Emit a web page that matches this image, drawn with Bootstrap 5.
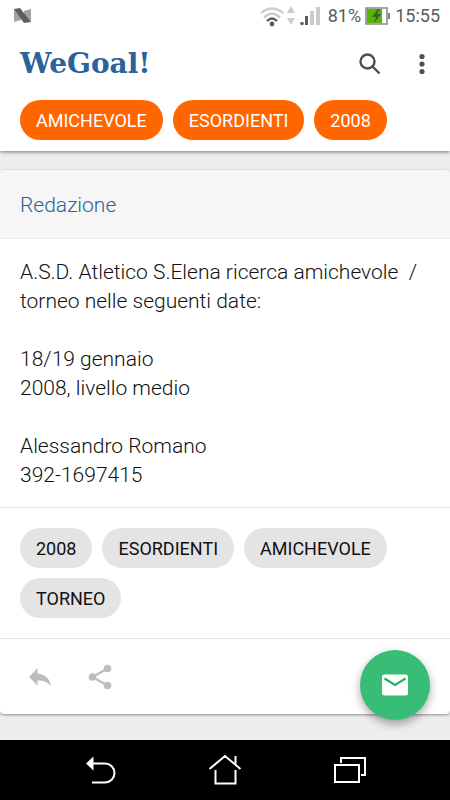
<!DOCTYPE html>
<html lang="it">
<head>
<meta charset="utf-8">
<meta name="viewport" content="width=device-width, initial-scale=1">
<title>WeGoal!</title>
<link href="https://cdn.jsdelivr.net/npm/bootstrap@5.3.0/dist/css/bootstrap.min.css" rel="stylesheet">
<style>
  body { font-family: Roboto, "Liberation Sans", sans-serif; background: #eee; color: #111; }
  svg { display: block; flex: none; }
  .status-bar { height: 31px; padding: 0 10px 0 13px; color: #5c5c5c; font-size: 18px; }
  .top-panel { background: #fff; box-shadow: 0 1px 4px rgba(0,0,0,.5); }
  .brand-row { height: 66px; padding: 0 14px 0 20px; }
  .wordmark { font: bold 28px/1 "DejaVu Serif", serif; color: #296399; }
  .icon-btn { color: #505050; }
  .chips { gap: 10px; }
  .filters { padding: 3px 20px 11px; }
  .chip { --bs-btn-padding-x: 16px; --bs-btn-padding-y: 0; --bs-btn-font-size: 18px; height: 40px; background: #e4e4e4; color: #111; }
  .chip-active { background: #f60; color: #fff; }
  .post { margin: 19px 0 26px; border: 0; border-radius: 4px; overflow: hidden; box-shadow: 0 1px 3px rgba(0,0,0,.4); color: #111; }
  .post-head { padding: 21px 20px 18px; background: #f6f6f6; border-bottom: 1px solid #eee; font-size: 21px; line-height: 29px; font-weight: 300; }
  .post-head a { color: #296399; }
  .post-text { padding: 19px 20px 17px; font-size: 21px; line-height: 29px; font-weight: 300; }
  .post-text p { margin: 0 0 29px; }
  .post-tags { padding: 20px; border-top: 1px solid #e9e9e9; border-bottom: 1px solid #e9e9e9; }
  .post-actions { height: 75px; padding: 0 28px; gap: 36px; }
  .post-actions button { color: #bdbdbd; }
  .compose { right: 20px; bottom: 80px; width: 70px; height: 70px; background: #38bd76; box-shadow: 0 4px 10px rgba(0,0,0,.35); z-index: 5; }
  .system-nav { height: 60px; background: #000; padding: 0 37px 0 39px; }
  .system-nav button { color: #fff; }
</style>
</head>
<body class="d-flex flex-column min-vh-100">
<header class="top-panel">
  <div class="status-bar d-flex align-items-center justify-content-between">
    <svg width="19" height="16" viewBox="0 0 19 16"><path fill="#a2a2a2" d="M1 1l7 6v5l-7 2zM18 1v13l-7-5V3z"/><path fill="#5e5e5e" d="M1 1l6-1 11 14-7 1z"/></svg>
    <div class="d-flex align-items-center">
      <svg width="64" height="22" viewBox="0 0 64 22">
        <g fill="none" stroke-width="2.4"><path stroke="#ccc" d="M1 8Q12-1 23 8M4 12.500Q12 5 20 12.500"/><path stroke="#5c5c5c" d="M7 16q5-5 10 0"/></g>
        <circle cx="12" cy="19" r="2.400" fill="#5c5c5c"/>
        <path fill="#ccc" d="M31 1l4 7h-8zM27 13h8l-4 7zM50 6h4v14h-4zM56 2h4v18h-4z"/><path fill="#5c5c5c" d="M45 11h3v9h-3z"/><circle cx="42" cy="18.500" r="1.800" fill="#5c5c5c"/>
      </svg>
      <span class="ms-1">81%</span>
      <svg class="ms-1" width="26" height="18" viewBox="0 0 26 18"><path fill="#fff" stroke="#858585" stroke-width="1.500" d="M1 1h21v16H1z"/><path fill="#55b600" d="M2 2h15v14H2z"/><path fill="#858585" d="M23 6h2v6h-2z"/><path fill="#3b5f27" d="M13 2L7 10h4l-2 6 7-9h-4l3-5z"/></svg>
      <span class="ms-1">15:55</span>
    </div>
  </div>
  <div class="brand-row d-flex align-items-center">
    <a href="#" class="wordmark text-decoration-none me-auto">WeGoal!</a>
    <button type="button" class="btn icon-btn border-0 p-0" aria-label="Cerca"><svg width="28" height="28" viewBox="0 0 28 28" fill="none" stroke="currentColor" stroke-width="2.400"><circle cx="11.500" cy="11.500" r="7"/><path d="M16.500 16.500l7 7"/></svg></button>
    <button type="button" class="btn icon-btn border-0 p-0 ms-4" aria-label="Menu"><svg width="28" height="28" viewBox="0 0 28 28" fill="currentColor"><circle cx="14" cy="6.500" r="2.600"/><circle cx="14" cy="14" r="2.600"/><circle cx="14" cy="21.500" r="2.600"/></svg></button>
  </div>
  <div class="filters chips d-flex flex-wrap">
    <button type="button" class="btn chip chip-active rounded-pill border-0">AMICHEVOLE</button>
    <button type="button" class="btn chip chip-active rounded-pill border-0">ESORDIENTI</button>
    <button type="button" class="btn chip chip-active rounded-pill border-0">2008</button>
  </div>
</header>
<main class="flex-grow-1">
  <article class="card post">
    <div class="post-head"><a href="#" class="text-decoration-none">Redazione</a></div>
    <div class="post-text">
      <p>A.S.D. Atletico S.Elena ricerca amichevole&nbsp; / torneo nelle seguenti date:</p>
      <p>18/19 gennaio<br>2008, livello medio</p>
      <p class="mb-0">Alessandro Romano<br>392-1697415</p>
    </div>
    <div class="post-tags chips d-flex flex-wrap">
      <button type="button" class="btn chip rounded-pill border-0">2008</button>
      <button type="button" class="btn chip rounded-pill border-0">ESORDIENTI</button>
      <button type="button" class="btn chip rounded-pill border-0">AMICHEVOLE</button>
      <button type="button" class="btn chip rounded-pill border-0">TORNEO</button>
    </div>
    <div class="post-actions d-flex align-items-center">
      <button type="button" class="btn border-0 p-0" aria-label="Rispondi"><svg width="24" height="26" viewBox="0 0 24 26" fill="currentColor"><path d="M9.500 4v5.500C17 10 22 15 23 22c-4-4.500-8-5.500-13.500-5.500v5L1 13z"/></svg></button>
      <button type="button" class="btn border-0 p-0" aria-label="Condividi"><svg width="24" height="26" viewBox="0 0 24 26" fill="currentColor"><path fill="none" stroke="currentColor" stroke-width="2.200" d="M19.500 4.500L4.500 13l15 8.500"/><circle cx="19.500" cy="4.500" r="3.800"/><circle cx="4.500" cy="13" r="3.800"/><circle cx="19.500" cy="21.500" r="3.800"/></svg></button>
    </div>
  </article>
</main>
<button type="button" class="btn compose position-fixed rounded-circle border-0 p-0 d-flex align-items-center justify-content-center" aria-label="Scrivi"><svg width="28" height="22" viewBox="0 0 28 22"><rect x="1" y=".5" width="26" height="21" rx="2.500" fill="#fff"/><path fill="none" stroke="#1db763" stroke-width="2.200" d="M3.500 4.500L14 11l10.500-6.500"/></svg></button>
<nav class="system-nav d-flex align-items-center justify-content-around sticky-bottom">
  <button type="button" class="btn border-0 p-0" aria-label="Indietro"><svg width="32" height="32" viewBox="0 0 32 32" fill="none" stroke="currentColor" stroke-width="2"><path d="M7 9.500h13a9.500 9.500 0 0 1 0 19H7"/><path fill="currentColor" stroke="none" d="M1 9.500L8.500 2.500v14z"/></svg></button>
  <button type="button" class="btn border-0 p-0" aria-label="Home"><svg width="34" height="32" viewBox="0 0 34 32" fill="none" stroke="currentColor" stroke-width="2"><path d="M1.500 15L17 2l15.500 13M27.500 2v8M7.500 16v13.500h20V16"/></svg></button>
  <button type="button" class="btn border-0 p-0" aria-label="Recenti"><svg width="34" height="28" viewBox="0 0 34 28" fill="none" stroke="currentColor" stroke-width="2"><path d="M2 9h24v17H2zM8 7V2h24v17h-4"/></svg></button>
</nav>
<script src="https://cdn.jsdelivr.net/npm/bootstrap@5.3.0/dist/js/bootstrap.bundle.min.js"></script>
</body>
</html>
